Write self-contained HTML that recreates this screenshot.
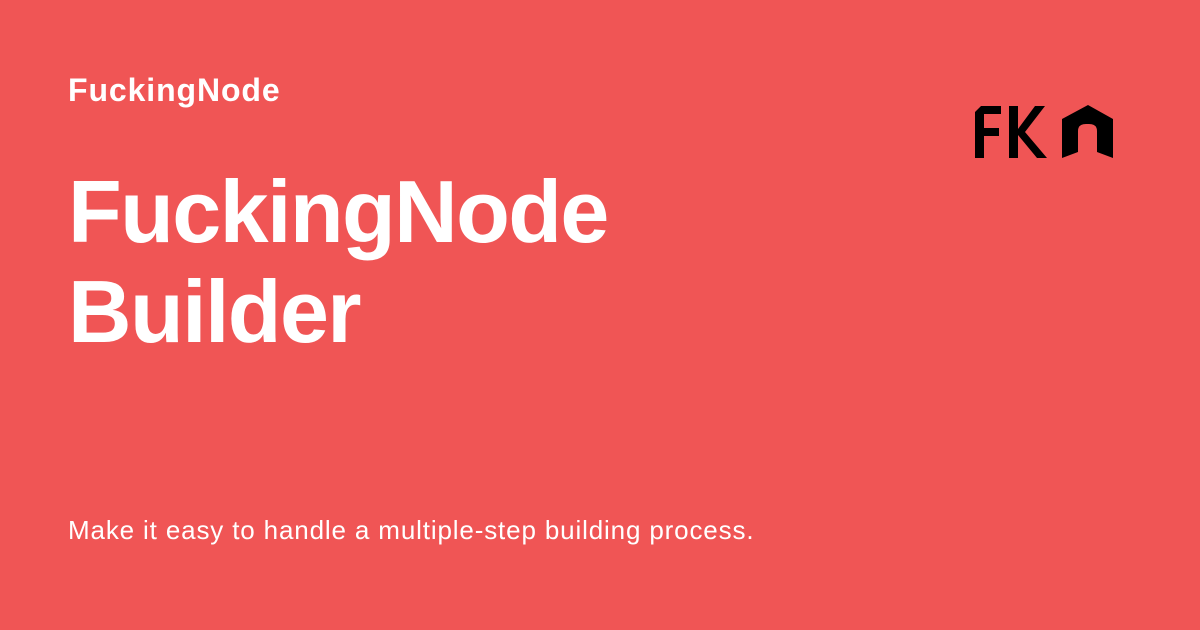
<!DOCTYPE html>
<html><head><meta charset="utf-8"><style>
html,body{margin:0;padding:0}
body{width:1200px;height:630px;background:#F05555;position:relative;overflow:hidden;font-family:"Liberation Sans",sans-serif;color:#fff}
.t{position:absolute;left:68px;white-space:nowrap}
#a{top:70px;font-size:32px;font-weight:bold;line-height:40px;letter-spacing:0.9px}
#b{top:162px;font-size:88px;font-weight:bold;line-height:100px;letter-spacing:-1.6px}
#c{top:513px;font-size:26px;line-height:34px;letter-spacing:0.85px}
svg{position:absolute;left:975px;top:104px}
</style></head><body>
<div class="t" id="a">FuckingNode</div>
<div class="t" id="b">FuckingNode<br>Builder</div>
<div class="t" id="c">Make it easy to handle a multiple-step building process.</div>
<svg width="138" height="55" viewBox="0 0 138 55">
<path d="M0 8 L6 2 L26 2 L26 10 L9 10 L9 24 L24 24 L24 32 L9 32 L9 54 L0 54 Z" fill="#000"/>
<path d="M34 2 L43 2 L43 25 L60 2 L70 2 L50 28 L72 54 L62 54 L43 31 L43 54 L34 54 Z" fill="#000"/>
<path d="M87 15 L113 1 L138 15 L138 54 L122 48 L122 27 Q122 20 114 20 L111 20 Q103 20 103 27 L103 48 L87 54 Z" fill="#000"/>
</svg>
</body></html>
